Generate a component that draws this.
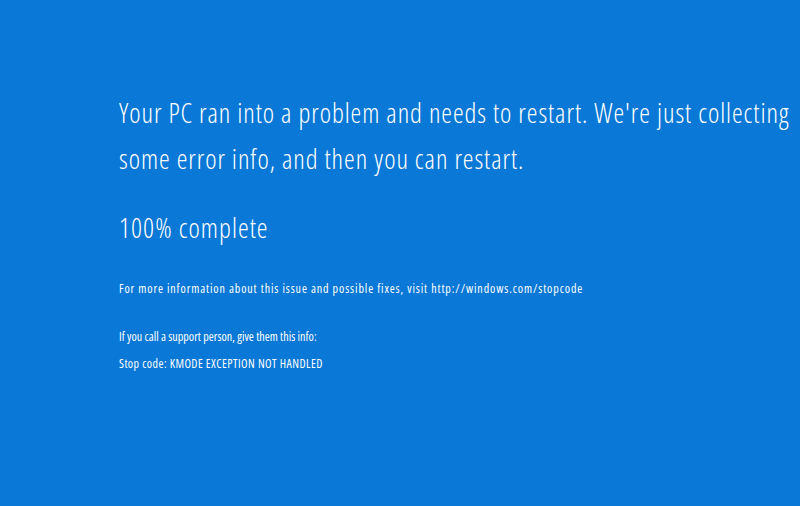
export default function App() {
  return (
    <div className="h-[506px] w-[800px] overflow-hidden bg-[#0a78d6] text-white font-['Open_Sans',sans-serif] font-light font-stretch-condensed">
      <div className="pl-[119px] pt-[90px]">
        <p className="text-[27px] leading-[46px] tracking-[0.95px] whitespace-nowrap">
          Your PC ran into a problem and needs to restart. We're just collecting
          <br />
          some error info, and then you can restart.
        </p>
        <p className="mt-[24px] text-[27px] leading-[44px] tracking-[1.05px]">100% complete</p>
        <p className="mt-[29px] text-[12px] leading-[20px] font-normal tracking-[0.9px] whitespace-nowrap">
          For more information about this issue and possible fixes, visit http://windows.com/stopcode
        </p>
        <div className="mt-[24px] text-[12px] leading-[27px] font-normal">
          <p className="tracking-[0.05px]">If you call a support person, give them this info:</p>
          <p className="tracking-[0.45px]">Stop code: KMODE EXCEPTION NOT HANDLED</p>
        </div>
      </div>
    </div>
  );
}
